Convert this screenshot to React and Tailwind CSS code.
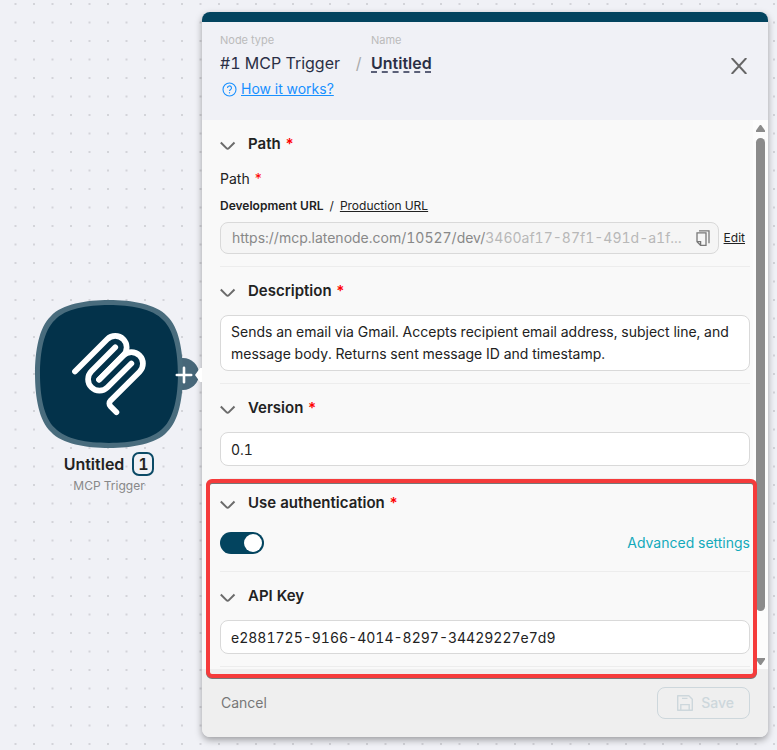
import { useState } from 'react';

const SQUIRCLE =
  'M74 0C97 0 121 4 132 16C144 27 148 51 148 74C148 97 144 121 132 132C121 144 97 148 74 148C51 148 27 144 16 132C4 121 0 97 0 74C0 51 4 27 16 16C27 4 51 0 74 0Z';

function CanvasDots() {
  return (
    <svg className="absolute inset-0 h-full w-full" aria-hidden="true">
      <pattern id="dots" width="37" height="37" patternUnits="userSpaceOnUse">
        <g fill="#d3d4d9">
          <rect x="33" y="3" width="2" height="2" />
          <rect x="14.5" y="3" width="2" height="2" />
          <rect x="33" y="21.5" width="2" height="2" />
          <rect x="14.5" y="21.5" width="2" height="2" />
        </g>
      </pattern>
      <rect width="100%" height="100%" fill="url(#dots)" />
    </svg>
  );
}

function TriggerNode() {
  return (
    <div className="absolute left-[35px] top-[300px] flex w-[148px] flex-col items-center">
      <svg width="148" height="148" viewBox="0 0 148 148" className="overflow-visible" aria-hidden="true">
        <circle cx="148" cy="74" r="16" fill="#476779" />
        <path d={SQUIRCLE} fill="#496c7d" />
        <path d={SQUIRCLE} fill="#03324a" transform="translate(5 5) scale(.932)" />
        <g
          transform="translate(31.4 31.2) scale(.475)"
          fill="none"
          stroke="#fff"
          strokeWidth="12"
          strokeLinecap="round"
        >
          <path d="M18 84.85L85.88 16.97C95.25 7.6 110.45 7.6 119.82 16.97C129.2 26.34 129.2 41.54 119.82 50.91L68.56 102.18" />
          <path d="M69.27 101.47L119.82 50.91C129.2 41.54 144.39 41.54 153.77 50.91L154.12 51.27C163.49 60.64 163.49 75.83 154.12 85.21L92.72 146.6C89.6 149.72 89.6 154.79 92.72 157.91L105.33 170.52" />
          <path d="M102.85 33.94L52.65 84.15C43.28 93.52 43.28 108.71 52.65 118.09C62.02 127.46 77.22 127.46 86.59 118.09L136.79 67.88" />
        </g>
      </svg>
      <button className="absolute left-[133px] top-[59px] flex size-8 items-center justify-center rounded-full" aria-label="Add node">
        <svg width="18" height="18" viewBox="0 0 18 18" stroke="#fff" strokeWidth="2.6" strokeLinecap="round">
          <path d="M9 1.8v14.4M1.8 9h14.4" />
        </svg>
      </button>
      <div className="mt-1 flex items-center gap-2">
        <span className="text-base font-semibold text-[#222]">Untitled</span>
        <span className="flex h-6 w-[22px] items-center justify-center rounded-[7px] border-2 border-[#0b4a66] text-base font-semibold text-[#222]">
          1
        </span>
      </div>
      <span className="mt-0.5 text-xs leading-4 text-[#888]">MCP Trigger</span>
    </div>
  );
}

function Chevron() {
  return (
    <svg width="16" height="16" viewBox="0 0 16 16" fill="none" stroke="#6b6b6b" strokeWidth="2" className="mt-1">
      <path d="M.8 4.5l5.6 5.6a1.8 1.8 0 0 0 2.5 0l5.6-5.6" />
    </svg>
  );
}

function Star() {
  return <span className="ml-1 text-[#f00]">*</span>;
}

function Section({ title, required, children }) {
  return (
    <section className="flex flex-col gap-3 border-b border-[#ededed] py-3">
      <button className="flex h-6 items-center text-left">
        <Chevron />
        <h2 className="ml-3 text-[15px] font-semibold leading-6 text-[#222]">
          {title}
          {required && <Star />}
        </h2>
      </button>
      {children}
    </section>
  );
}

function TextField({ label, value, onChange }) {
  return (
    <input
      aria-label={label}
      value={value}
      onChange={(e) => onChange(e.target.value)}
      className="h-[34px] w-full rounded-lg border border-[#d9d9d9] bg-white px-2.5 text-sm tabular-nums text-[#222] outline-none"
    />
  );
}

function CopyIcon() {
  return (
    <svg width="14" height="16" viewBox="0 0 14 16" fill="none" stroke="#777" strokeWidth="1.3">
      <path d="M1 2.9h9v12.4H4.6L1 11.7z" />
      <path d="M1 11.7h3.6v3.6" />
      <path d="M3 .8h10v12.4" />
    </svg>
  );
}

function SaveIcon() {
  return (
    <svg width="16" height="16" viewBox="0 0 16 16" fill="none" stroke="currentColor" strokeWidth="1.4">
      <path d="M.7.7h11.1l3.5 3.5v11.1H.7z" strokeLinejoin="round" />
      <path d="M3.8 15.3V9.6h8.4v5.7M5 3.4h5.5" />
    </svg>
  );
}

function ScrollBar() {
  return (
    <div className="flex w-[15px] shrink-0 flex-col items-center gap-1.5 bg-[#fcfcfc] pb-1 pt-[5px]" aria-hidden="true">
      <svg width="9" height="7" viewBox="0 0 9 7" fill="#8b8b8b">
        <path d="M3.5.6a1.2 1.2 0 0 1 2 0L9 5.6V7H0V5.6z" />
      </svg>
      <div className="w-[9px] grow-[27] rounded-full bg-[#8b8b8b]" />
      <div className="grow-[2]" />
      <svg width="9" height="7" viewBox="0 0 9 7" fill="#8b8b8b">
        <path d="M3.5 6.4a1.2 1.2 0 0 0 2 0L9 1.4V0H0v1.4z" />
      </svg>
    </div>
  );
}

export default function App() {
  const [description, setDescription] = useState(
    'Sends an email via Gmail. Accepts recipient email address, subject line, and message body. Returns sent message ID and timestamp.'
  );
  const [version, setVersion] = useState('0.1');
  const [apiKey, setApiKey] = useState('e2881725-9166-4014-8297-34429227e7d9');
  const [useAuth, setUseAuth] = useState(true);

  return (
    <main className="relative flex min-h-screen items-start bg-[#f0f1f6] py-3 pl-[202px] pr-[9px] font-['Inter',sans-serif] tabular-nums">
      <CanvasDots />
      <TriggerNode />

      <div className="relative min-w-0 flex-1 rounded-lg shadow-[0_3px_7px_rgba(0,0,0,0.35)]">
        {/* pointer towards the selected node */}
        <svg className="absolute -left-[7px] top-[356px]" width="7" height="14" viewBox="0 0 7 14" fill="#fff" aria-hidden="true">
          <path d="M0 7l5-7h2v14H5z" />
        </svg>

        <header className="flex items-start justify-between rounded-t-lg border-t-10 border-[#03445f] bg-[#f0f1f6] pb-[21px] pl-[18px] pr-5 pt-2.5">
          <div className="flex flex-col gap-1">
            <div className="flex items-end">
              <div className="flex flex-col gap-[3px]">
                <span className="text-[11px] leading-4 text-[#bbb]">Node type</span>
                <span className="text-base text-[#2a2f45]">#1 MCP Trigger</span>
              </div>
              <span className="ml-[15px] mr-[9px] w-[7px] text-center text-base text-[#aaa]">/</span>
              <div className="flex flex-col gap-[3px]">
                <span className="text-[11px] leading-4 text-[#bbb]">Name</span>
                <span className="text-base font-semibold text-[#2a2f45] underline decoration-[#5b6078] decoration-dashed decoration-2 underline-offset-2">
                  Untitled
                </span>
              </div>
            </div>
            <div className="flex items-center gap-1 pl-0.5 text-[#1890ff]">
              <svg width="15" height="15" viewBox="0 0 15 15" fill="none" stroke="currentColor" strokeWidth="1.1">
                <circle cx="7.5" cy="7.5" r="6.5" />
                <path d="M5.5 6a2 2 0 1 1 2.9 1.7c-.6.4-.9.6-.9 1.3" />
                <path d="M7.5 10.2v1.2" />
              </svg>
              <a href="#how" className="text-sm underline">How it works?</a>
            </div>
          </div>
          <button className="mt-[25px] flex size-[18px] items-center justify-center" aria-label="Close">
            <svg width="16" height="16" viewBox="0 0 16 16" stroke="#666" strokeWidth="2">
              <path d="M.7 0l14.6 16M15.3 0L.7 16" />
            </svg>
          </button>
        </header>

        <div className="flex bg-[#f9f9f9]">
          <div className="min-w-0 flex-1 pb-0.5 pl-[18px] pr-[3px]">
            <Section title="Path" required>
              <div className="flex flex-col gap-1.5">
                <div className="text-sm leading-[22px] text-[#222]">
                  Path
                  <Star />
                </div>
                <div className="flex gap-1.5 text-xs leading-5 text-[#222]">
                  <span className="font-semibold">Development URL</span>
                  <span>/</span>
                  <a href="#production" className="underline">Production URL</a>
                </div>
                <div className="flex items-center gap-[5px]">
                  <div className="flex h-8 min-w-0 flex-1 items-center justify-between rounded-lg border border-[#d9d9d9] bg-[#f5f5f5] pl-[11px] pr-2 text-sm text-[#888]">
                    <span className="truncate">
                      https://mcp.latenode.com/10527/dev/<span className="text-[#b8b8b8]">3460af17-87f1-491d-a1f...</span>
                    </span>
                    <button className="shrink-0" aria-label="Copy URL">
                      <CopyIcon />
                    </button>
                  </div>
                  <button className="mr-[5px] text-xs text-[#222] underline">Edit</button>
                </div>
              </div>
            </Section>

            <Section title="Description" required>
              <textarea
                aria-label="Description"
                rows={2}
                value={description}
                onChange={(e) => setDescription(e.target.value)}
                className="block w-full resize-none rounded-lg border border-[#d9d9d9] bg-white px-2.5 py-[5px] text-sm leading-[22px] text-[#222] outline-none"
              />
            </Section>

            <Section title="Version" required>
              <TextField label="Version" value={version} onChange={setVersion} />
            </Section>

            <div className="relative">
              <Section title="Use authentication" required>
                <div className="flex h-8 items-center justify-between">
                  <input
                    type="checkbox"
                    aria-label="Use authentication"
                    checked={useAuth}
                    onChange={(e) => setUseAuth(e.target.checked)}
                    className="flex h-[22px] w-11 appearance-none items-center rounded-full bg-[#aaa] px-0.5 before:size-[18px] before:rounded-full before:bg-white before:content-[''] checked:justify-end checked:bg-[#03445f]"
                  />
                  <a href="#advanced" className="text-sm text-[#13aabb]">Advanced settings</a>
                </div>
              </Section>
              <Section title="API Key">
                <TextField label="API Key" value={apiKey} onChange={setApiKey} />
              </Section>
              {/* callout frame around the auth settings, runs over the footer edge */}
              <div className="pointer-events-none absolute -bottom-[11px] -left-3.5 -right-[7px] top-0 z-10 rounded-md border-4 border-[#f53b3b] drop-shadow-[0_1px_0_#777]" />
            </div>
          </div>
          <ScrollBar />
        </div>

        <footer className="flex items-center justify-between rounded-b-lg bg-[#efefef] py-[18px] pl-[19px] pr-[18px]">
          <button className="text-sm text-[#777]">Cancel</button>
          <button
            disabled
            className="flex h-8 items-center gap-2 rounded-lg border border-[#cdd7dc] pl-[19px] pr-[15px] text-sm font-medium text-[#cdd7dc]"
          >
            <SaveIcon />
            Save
          </button>
        </footer>
      </div>
    </main>
  );
}
